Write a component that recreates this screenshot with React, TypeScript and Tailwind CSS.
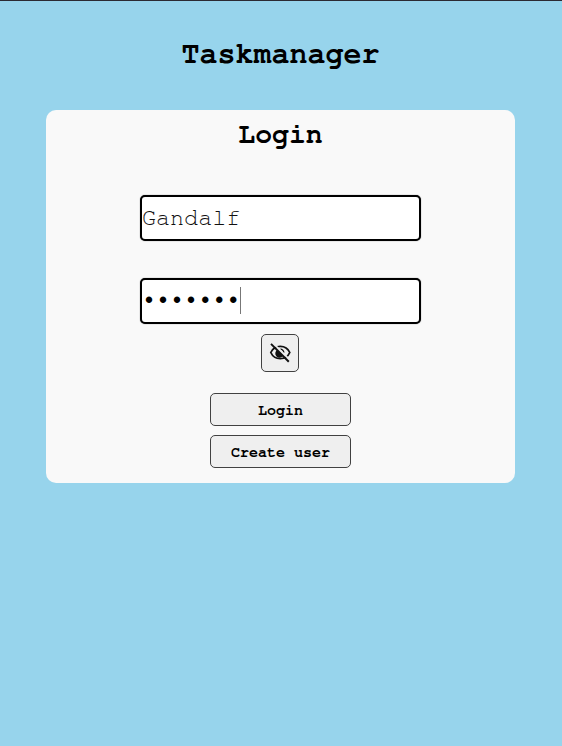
import type { ReactNode } from "react";

function Field({ className, children }: { className: string; children: ReactNode }) {
  return (
    <div
      className={`flex h-[46px] w-[281px] items-center rounded-[5px] border-2 border-black bg-white shadow-[0_0_1px_#555] ${className}`}
    >
      {children}
    </div>
  );
}

function ActionButton({ className, label }: { className: string; label: string }) {
  return (
    <button
      className={`mr-px flex h-[33px] w-[141px] items-center justify-center rounded-[5px] border border-[#414141] bg-[#efefef] text-[15px] leading-none font-bold text-black ${className}`}
    >
      <span className="block pt-px pl-px">{label}</span>
    </button>
  );
}

function EyeOffIcon() {
  return (
    <svg width="24" height="24" viewBox="0 0 24 24" fill="none" stroke="#111" strokeWidth="1.8">
      <path d="M2.8 11.5C4.6 7.5 8 5.4 12.3 5.4S20 7.5 21.8 11.5C20 15.5 16.6 17.6 12.3 17.6S4.6 15.5 2.8 11.5Z" />
      <path d="M9.2 9A4.2 4.2 0 1 0 15 14.8Z" fill="#111" stroke="none" />
      <path d="M12.3 8.2A3.5 3.5 0 0 1 15.8 11.7" strokeWidth="1.3" />
      <path d="M5 2.2L22 19.2" stroke="#efefef" strokeWidth="1.8" />
      <path d="M3 2.9L20.8 20.7" strokeWidth="2" />
    </svg>
  );
}

export default function App() {
  return (
    <main className="flex h-[746px] w-[562px] flex-col items-center overflow-hidden border-t border-[#2b2a33] bg-[#97d4ec] font-['Courier_10_Pitch','Nimbus_Mono_PS','FreeMono','Liberation_Mono',monospace] text-black">
      <h1 className="mt-[35px] mr-px h-[36px] text-[30px] leading-[36px] font-bold">Taskmanager</h1>
      <section className="mt-[38px] mr-px flex h-[373px] w-[469px] flex-col items-center rounded-[10px] bg-[#f9f9f9]">
        <h2 className="mt-[9px] h-[32px] text-[28.1px] leading-[32px] font-bold">Login</h2>
        <Field className="mt-[44px]">
          <span className="block pt-[2px] text-[23.4px] leading-none text-[#111]">Gandalf</span>
        </Field>
        <Field className="mt-[37px]">
          <span className="block pt-[3px] font-['Liberation_Mono',monospace] text-[23.4px] leading-none">
            •••••••
          </span>
          <span className="-mt-px h-[27px] w-px bg-[#777]" />
        </Field>
        <button
          aria-label="Show password"
          className="mt-[10px] mr-px flex h-[38px] w-[38px] items-center justify-center rounded-[5px] border border-[#414141] bg-[#efefef]"
        >
          <EyeOffIcon />
        </button>
        <ActionButton className="mt-[21px]" label="Login" />
        <ActionButton className="mt-[9px]" label="Create user" />
      </section>
    </main>
  );
}
